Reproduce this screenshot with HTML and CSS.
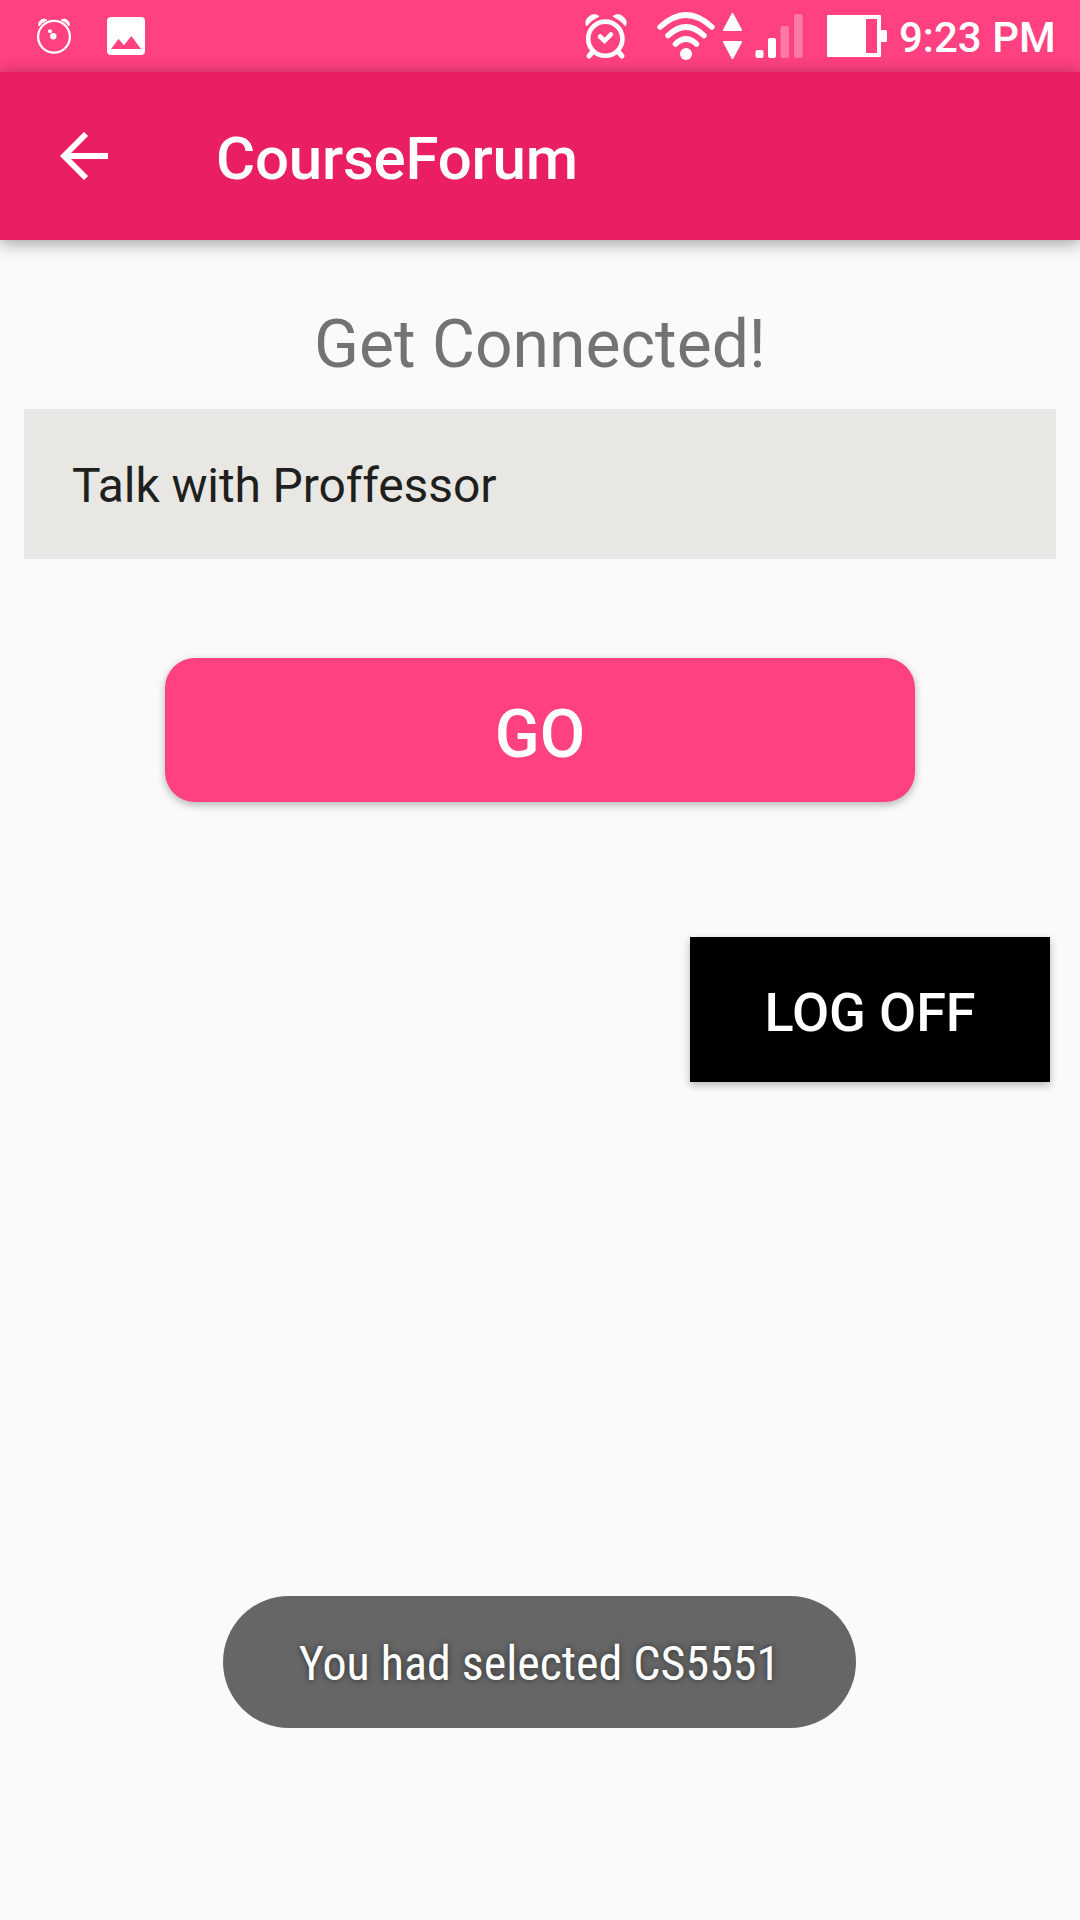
FILE: index.html
```html
<!DOCTYPE html>
<html lang="en">
<head>
<meta charset="utf-8">
<title>CourseForum</title>
<link rel="stylesheet" href="styles.css">
</head>
<body>
<div class="screen">
  <header class="status-bar">
    <svg class="status-icons" width="180" height="72" viewBox="0 0 180 72" fill="#fff">
      <circle cx="54" cy="36.700" r="15.900" fill="none" stroke="#fff" stroke-width="2.300"/>
      <path d="M39 26a5.200 5.200 0 0 1 7.800-6q-5 2-7.800 6zM69 26a5.200 5.200 0 0 0-7.800-6q5 2 7.800 6z" stroke="#fff"/>
      <circle cx="53.300" cy="36.200" r="3.200"/>
      <circle cx="50" cy="31.200" r="2"/>
      <path fill-rule="evenodd" d="M111 17h30q4 0 4 4v30q0 4-4 4h-30q-4 0-4-4V21q0-4 4-4zM111 49h30l-9.700-13-7.300 9.300-5.500-6.300z"/>
    </svg>
    <svg class="status-icons" width="320" height="72" viewBox="570 0 320 72" fill="#fff">
      <g fill="none" stroke="#fff" stroke-linecap="round">
        <circle cx="605.300" cy="38.700" r="17.100" stroke-width="4.600"/>
        <path stroke-width="4.500" d="M600 36.500l4.500 4.300 6.500-6.500"/>
        <path stroke-width="5" d="M592.500 52l-3.500 4M618.500 52l3.500 4"/>
        <path stroke-width="5.500" d="M660 27q26-24 52 0M668 35.500q18-17 36 0M675.500 44q10.500-10 21 0"/>
      </g>
      <path d="M586.500 26a8.300 8.300 0 0 1 12.500-9.700q-7.500 3.200-12.500 9.700zM625.500 26a8.300 8.300 0 0 0-12.500-9.700q7.500 3.200 12.500 9.700z" stroke="#fff" stroke-linejoin="round"/>
      <circle cx="686" cy="54" r="6"/>
      <path stroke="#fff" stroke-width="2" stroke-linejoin="round" d="M732.500 14l8.500 16h-17zM732.500 58l8.500-16h-17z"/>
      <rect x="755.500" y="50" width="8" height="8" rx="2"/>
      <rect x="768" y="38" width="8" height="20" rx="2"/>
      <rect x="780.500" y="26" width="8.500" height="32" rx="2" opacity=".3"/>
      <rect x="794" y="14" width="8.500" height="44" rx="2" opacity=".3"/>
      <path fill-rule="evenodd" d="M828 15h52q1 0 1 1v14h4.500q1.500 0 1.500 1.500v9q0 1.500-1.500 1.500H881v14q0 1-1 1h-52q-1 0-1-1V16q0-1 1-1zM866 19v34h11V19z"/>
    </svg>
    <time class="clock">9:23 PM</time>
  </header>

  <nav class="app-bar">
    <svg class="back" width="48" height="48" viewBox="0 0 48 48" fill="none" stroke="#fff" stroke-width="5.800">
      <path d="M48 24H5M26 2L4 24l22 22"/>
    </svg>
    <h1 class="title">CourseForum</h1>
  </nav>

  <main class="content">
    <h2 class="heading">Get Connected!</h2>
    <div class="option">Talk with Proffessor</div>
    <button class="button go">GO</button>
    <button class="button log-off">LOG OFF</button>
  </main>

  <div class="toast"><span class="toast-text">You had selected CS5551</span></div>
</div>
</body>
</html>
```

FILE: styles.css
```css
* {
  box-sizing: border-box;
}

body {
  margin: 0;
  background: #fafafa;
  font-family: Roboto, sans-serif;
}

.screen {
  position: relative;
  width: 1080px;
  height: 1920px;
  overflow: hidden;
  background: #fafafa;
}

.status-bar {
  display: flex;
  height: 72px;
  background: #ff4081;
  color: #fff;
}

.status-icons {
  display: block;
  flex: none;
}

.status-icons + .status-icons {
  margin-left: 390px;
}

.clock {
  margin-left: 9px;
  padding-top: 2px;
  font-size: 42px;
  font-weight: 500;
  line-height: 72px;
  white-space: nowrap;
}

.app-bar {
  position: relative;
  display: flex;
  align-items: center;
  height: 168px;
  padding-left: 60px;
  background: #e91e63;
  color: #fff;
  box-shadow: 0 3px 16px rgba(0, 0, 0, 0.38);
}

.back {
  flex: none;
}

.title {
  margin: 0 0 0 108px;
  padding-top: 6px;
  font-size: 60px;
  font-weight: 500;
  letter-spacing: -0.22px;
  line-height: 70px;
}

.content {
  display: flex;
  flex-direction: column;
  padding: 65px 24px 0;
}

.heading {
  margin: 0 0 24px;
  color: #737373;
  font-size: 66px;
  font-weight: 400;
  line-height: 80px;
  text-align: center;
}

.option {
  height: 150px;
  padding: 3px 48px 0;
  background: #e8e7e3;
  color: #1f1f1e;
  font-size: 48px;
  letter-spacing: -0.12px;
  line-height: 147px;
}

.button {
  border: 0;
  color: #fff;
  font-family: inherit;
  font-weight: 500;
  box-shadow: 0 3px 8px rgba(0, 0, 0, 0.28);
}

.go {
  align-self: center;
  width: 750px;
  height: 144px;
  margin-top: 99px;
  padding: 9px 0 0;
  border-radius: 30px;
  background: #ff4081;
  font-size: 66px;
}

.log-off {
  align-self: flex-end;
  width: 360px;
  height: 145px;
  margin: 135px 6px 0 0;
  padding: 6px 0 0;
  background: #000;
  font-size: 54px;
  letter-spacing: -0.1px;
}

.toast {
  position: absolute;
  top: 1596px;
  left: 223px;
  display: flex;
  justify-content: center;
  width: 633px;
  height: 132px;
  padding-top: 2px;
  border-radius: 66px;
  background: #666;
}

.toast-text {
  color: #fff;
  font-family: "Roboto Condensed", Roboto, sans-serif;
  font-size: 48px;
  font-stretch: 75%;
  line-height: 132px;
  white-space: nowrap;
  text-shadow: 0 0 6px rgba(0, 0, 0, 0.55);
}
```
